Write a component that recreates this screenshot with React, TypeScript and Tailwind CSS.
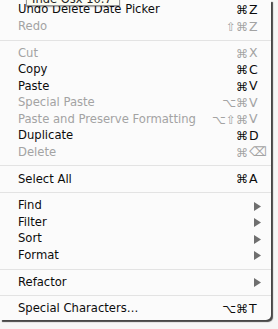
import { Fragment } from "react";

type Item =
  | { sep: true }
  | {
      sep?: false;
      label: string;
      mods?: string;
      keyChar?: string;
      disabled?: boolean;
      submenu?: boolean;
    };

const items: Item[] = [
  { label: "Undo Delete Date Picker", mods: "⌘", keyChar: "Z" },
  { label: "Redo", mods: "⇧⌘", keyChar: "Z", disabled: true },
  { sep: true },
  { label: "Cut", mods: "⌘", keyChar: "X", disabled: true },
  { label: "Copy", mods: "⌘", keyChar: "C" },
  { label: "Paste", mods: "⌘", keyChar: "V" },
  { label: "Special Paste", mods: "⌥⌘", keyChar: "V", disabled: true },
  { label: "Paste and Preserve Formatting", mods: "⌥⇧⌘", keyChar: "V", disabled: true },
  { label: "Duplicate", mods: "⌘", keyChar: "D" },
  { label: "Delete", mods: "⌘", keyChar: "⌫", disabled: true },
  { sep: true },
  { label: "Select All", mods: "⌘", keyChar: "A" },
  { sep: true },
  { label: "Find", submenu: true },
  { label: "Filter", submenu: true },
  { label: "Sort", submenu: true },
  { label: "Format", submenu: true },
  { sep: true },
  { label: "Refactor", submenu: true },
  { sep: true },
  { label: "Special Characters…", mods: "⌥⌘", keyChar: "T" },
];

function Arrow() {
  return (
    <svg width="7" height="9" viewBox="0 0 7 9" className="block">
      <path d="M0 0 L7 4.5 L0 9 Z" fill="#6f6f6f" />
    </svg>
  );
}

export default function App() {
  return (
    <div
      className="relative h-[329px] w-[278px] overflow-hidden bg-[#f6f6f6]"
      style={{ fontFamily: '"DejaVu Sans", "Liberation Sans", sans-serif' }}
    >
      {/* Menu */}
      <div className="w-[271px] rounded-br-[5px] bg-[#fbfbfb] pt-[2px] pb-[3px] shadow-[2px_2px_1px_rgba(40,40,40,0.85)]">
        {items.map((it, i) =>
          it.sep ? (
            <div key={i} className="flex h-[10.3px] items-center">
              <div className="h-px w-full bg-[#e3e3e3]" />
            </div>
          ) : (
            <div
              key={i}
              className={
                "flex h-[16.5px] items-center text-[11.6px] leading-none " +
                (it.disabled ? "text-[#a3a3a3]" : "text-[#0c0c0c]")
              }
            >
              <span className="ml-[18px] flex-1 whitespace-nowrap">{it.label}</span>
              {it.submenu ? (
                <span className="mr-[10px]">
                  <Arrow />
                </span>
              ) : (
                <Fragment>
                  <span className="text-right text-[12px]">{it.mods}</span>
                  <span className="ml-[1px] mr-[11px] w-[11px] text-left text-[12.5px]">
                    {it.keyChar}
                  </span>
                </Fragment>
              )}
            </div>
          )
        )}
      </div>

      {/* Tooltip peeking from above */}
      <div className="absolute left-[26px] top-[-9px] h-[15px] w-[94px] border border-[#9a9a9a] bg-[#fcfcf2] pl-[5px] text-[11.5px] leading-[14px] text-[#222] shadow-[0_1px_1px_rgba(0,0,0,0.3)]">
        Inde Osx 10.7
      </div>
    </div>
  );
}
